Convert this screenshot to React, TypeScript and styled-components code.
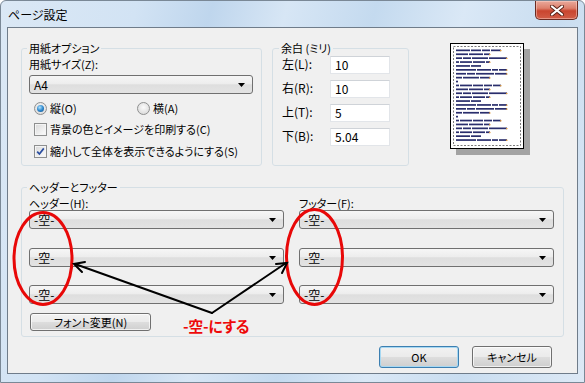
import React from "react";
import styled, { createGlobalStyle } from "styled-components";

const GlobalStyle = createGlobalStyle`
  html, body {
    margin: 0;
    padding: 0;
    background: #ffffff;
  }
  body {
    font-family: "Noto Sans CJK JP", "Noto Sans", sans-serif;
    font-size: 11px;
    color: #000;
    font-feature-settings: "palt" 1;
  }
`;

const Window = styled.div`
  position: relative;
  width: 585px;
  height: 383px;
  box-sizing: border-box;
  border: 1px solid #7a8896;
  border-radius: 6px 6px 0 0;
  padding: 0 6px 8px 6px;
  display: flex;
  flex-direction: column;
  overflow: hidden;
  background: linear-gradient(
    105deg,
    #dbe8f5 0%,
    #d2e3f4 20%,
    #bfd6ed 31%,
    #d7e6f5 42%,
    #c4daef 55%,
    #dae8f6 68%,
    #c9ddf0 82%,
    #dde9f6 100%
  );
`;

const TitleBar = styled.div`
  height: 26px;
  display: flex;
  align-items: flex-start;
`;

const Title = styled.div`
  padding-top: 7px;
  margin-left: 1px;
  font-size: 12px;
  line-height: 14px;
  color: #000;
`;

const CloseButton = styled.div`
  margin-left: auto;
  width: 43px;
  height: 19px;
  box-sizing: border-box;
  border: 1px solid #6b2b22;
  border-top: none;
  border-radius: 0 0 5px 5px;
  background: linear-gradient(
    180deg,
    #e9a99b 0%,
    #dd806c 40%,
    #c9452f 55%,
    #d15d47 100%
  );
  box-shadow: inset 0 0 0 1px rgba(255, 220, 210, 0.45);
  display: flex;
  align-items: center;
  justify-content: center;
`;

const Client = styled.div`
  flex: 1;
  border: 1px solid #6f7c8a;
  background: #f0f0f0;
  padding: 13px 12px 0 13px;
  display: flex;
  flex-direction: column;
`;

const TopRow = styled.div`
  display: flex;
  align-items: flex-start;
`;

const Group = styled.fieldset<{ $w: number; $h: number; $pl?: number }>`
  margin: 0;
  box-sizing: border-box;
  width: ${(p) => p.$w}px;
  height: ${(p) => p.$h}px;
  border: 1px solid #d5dfe5;
  border-radius: 3px;
  padding: 0 8px 0 ${(p) => p.$pl ?? 7}px;
  min-width: 0;
`;

const Legend = styled.legend<{ $ml?: number }>`
  padding: 0 2px;
  margin-left: ${(p) => p.$ml ?? -2}px;
  font-size: 11px;
  line-height: 14px;
`;

const Label = styled.div<{ $mt?: number }>`
  line-height: 14px;
  margin-top: ${(p) => p.$mt ?? 0}px;
`;

const Combo = styled.div<{ $mt?: number }>`
  height: 19px;
  box-sizing: border-box;
  margin-top: ${(p) => p.$mt ?? 0}px;
  border: 1px solid #707070;
  border-radius: 3px;
  background: linear-gradient(
    180deg,
    #f6f6f6 0%,
    #ededed 45%,
    #dedede 52%,
    #e3e3e3 100%
  );
  display: flex;
  align-items: center;
  justify-content: space-between;
  padding: 0 7px 0 4px;
  font-size: 12px;
  line-height: 14px;
`;

const ChoiceRow = styled.div<{ $mt: number }>`
  display: flex;
  align-items: center;
  height: 14px;
  margin-top: ${(p) => p.$mt}px;
  padding-left: 5px;
`;

const Choice = styled.label<{ $w?: number }>`
  display: flex;
  align-items: center;
  gap: 3px;
  width: ${(p) => (p.$w ? `${p.$w}px` : "auto")};
  line-height: 14px;
`;

const Radio = styled.span<{ $on?: boolean }>`
  position: relative;
  width: 11px;
  height: 11px;
  border-radius: 50%;
  border: 1px solid #8e8f8f;
  background: radial-gradient(circle at 50% 40%, #fbfbfb 0%, #d4d4d4 100%);
  flex: none;
  &::after {
    content: "";
    display: ${(p) => (p.$on ? "block" : "none")};
    position: absolute;
    left: 2px;
    top: 2px;
    width: 7px;
    height: 7px;
    border-radius: 50%;
    background: radial-gradient(
      circle at 40% 35%,
      #b4e4fb 0%,
      #2f8ad0 50%,
      #13497f 100%
    );
  }
`;

const Check = styled.span`
  width: 13px;
  height: 13px;
  box-sizing: border-box;
  border: 1px solid #8e8f8f;
  background: linear-gradient(135deg, #d8d8d8 0%, #f6f6f6 80%);
  box-shadow: inset 0 0 0 1px #f4f4f4;
  flex: none;
  display: flex;
  align-items: center;
  justify-content: center;
`;

const MarginGrid = styled.div`
  display: grid;
  grid-template-columns: 48px 60px;
  grid-auto-rows: 18px;
  row-gap: 6px;
  margin-top: 1px;
  align-items: center;
`;

const MarginLabel = styled.div`
  font-size: 12px;
  line-height: 14px;
  margin-top: -2px;
`;

const TextBox = styled.div`
  height: 18px;
  box-sizing: border-box;
  background: #fff;
  border: 1px solid #e2e5e9;
  border-top-color: #cfd3d8;
  padding: 0 4px;
  font-size: 12px;
  line-height: 16px;
`;

const PreviewPage = styled.div`
  width: 74px;
  height: 106px;
  box-sizing: border-box;
  margin: 2px 0 0 41px;
  background: #fff;
  border: 1px solid #000;
  box-shadow: 6px 6px 0 #a3a3a3;
`;

const BottomGroup = styled(Group)`
  margin-top: 14px;
`;

const Columns = styled.div`
  display: grid;
  grid-template-columns: 255px 255px;
  column-gap: 15px;
`;

const Column = styled.div`
  display: flex;
  flex-direction: column;
`;

const PushButton = styled.div<{ $w: number; $h: number; $default?: boolean }>`
  width: ${(p) => p.$w}px;
  height: ${(p) => p.$h}px;
  box-sizing: border-box;
  border: 1px solid ${(p) => (p.$default ? "#3c7fb1" : "#707070")};
  border-radius: 3px;
  background: linear-gradient(
    180deg,
    #f2f2f2 0%,
    #ebebeb 48%,
    #dddddd 52%,
    #cfcfcf 100%
  );
  box-shadow: inset 0 0 0 1px
    ${(p) => (p.$default ? "#a7d8f2" : "rgba(255,255,255,0.7)")};
  display: flex;
  align-items: center;
  justify-content: center;
  font-size: 11px;
  line-height: 14px;
`;

const FontButton = styled(PushButton)`
  margin: 9px 0 0 1px;
`;

const ButtonRow = styled.div`
  display: flex;
  justify-content: flex-end;
  gap: 13px;
  margin-top: 9px;
  padding-right: 13px;
`;

const Overlay = styled.svg`
  position: absolute;
  left: -1px;
  top: -1px;
  pointer-events: none;
`;

const Note = styled.span`
  position: absolute;
  left: 182px;
  top: 316px;
  font-size: 15px;
  line-height: 18px;
  font-weight: bold;
  color: #ee0a0a;
  letter-spacing: -0.3px;
`;

const Arrow: React.FC = () => (
  <svg width="7" height="4" viewBox="0 0 7 4">
    <path d="M0 0 H7 L3.5 4 Z" fill="#000" />
  </svg>
);

const ComboBox: React.FC<{ text: string; mt?: number }> = ({ text, mt }) => (
  <Combo $mt={mt}>
    <span>{text}</span>
    <Arrow />
  </Combo>
);

const CheckMark: React.FC = () => (
  <svg width="9" height="9" viewBox="0 0 9 9">
    <path
      d="M1.2 4.6 L3.4 7 L7.8 1.4"
      fill="none"
      stroke="#2b4ea0"
      strokeWidth="1.7"
    />
  </svg>
);

// thumbnail of the printed page: rows of tiny "words"
const rows: number[][] = [
  [14, 10, 8, 10],
  [12, 14, 6],
  [6, 8, 16, 18],
  [3, 12, 12, 4],
  [14, 10],
  [20, 14, 6, 8],
  [10, 8, 18, 12],
  [6, 16, 10],
  [2],
  [3, 12, 10, 8, 8],
  [12, 14, 6],
  [6, 8, 16, 18],
  [3, 12, 12, 4],
  [14, 10],
  [20, 14, 6, 8],
  [10, 8, 18, 12],
  [6, 16, 10],
  [2],
  [3, 12, 10, 8, 8],
  [12, 14, 6],
  [6, 8, 16, 18],
  [3, 12, 12, 4],
  [14, 10],
  [20, 14, 6, 8],
];

const PageThumb: React.FC = () => (
  <svg width="72" height="104" viewBox="0 0 72 104">
    <rect
      x="2.5"
      y="2.5"
      width="67"
      height="99"
      fill="none"
      stroke="#7a7a7a"
      strokeDasharray="2 1.5"
    />
    {rows.map((words, i) => {
      let x = 5;
      return (
        <g key={i}>
          {words.map((w, j) => {
            const r = (
              <rect
                key={j}
                x={x}
                y={5.5 + i * 3.9}
                width={w}
                height={1.7}
                fill="#2a2e6c"
              />
            );
            x += w + 1;
            return r;
          })}
          {words.length > 2 && (
            <rect
              x={x - 2}
              y={6 + i * 3.9}
              width={1.5}
              height={1.2}
              fill="#e09a3a"
            />
          )}
        </g>
      );
    })}
  </svg>
);

const App: React.FC = () => {
  return (
    <>
      <GlobalStyle />
      <Window>
        <TitleBar>
          <Title>ページ設定</Title>
          <CloseButton>
            <svg width="14" height="11" viewBox="0 0 14 11">
              <path
                d="M2 1.5 L12 9.5 M12 1.5 L2 9.5"
                stroke="#5a2318"
                strokeWidth="4"
                strokeLinecap="round"
              />
              <path
                d="M2 1.5 L12 9.5 M12 1.5 L2 9.5"
                stroke="#ffffff"
                strokeWidth="2.2"
                strokeLinecap="round"
              />
            </svg>
          </CloseButton>
        </TitleBar>
        <Client>
          <TopRow>
            <Group $w={241} $h={125}>
              <Legend>用紙オプション</Legend>
              <Label $mt={2}>用紙サイズ(Z):</Label>
              <ComboBox text="A4" mt={4} />
              <ChoiceRow $mt={7}>
                <Choice $w={103}>
                  <Radio $on />
                  <span>縦(O)</span>
                </Choice>
                <Choice>
                  <Radio />
                  <span>横(A)</span>
                </Choice>
              </ChoiceRow>
              <ChoiceRow $mt={7}>
                <Choice>
                  <Check />
                  <span>背景の色とイメージを印刷する(C)</span>
                </Choice>
              </ChoiceRow>
              <ChoiceRow $mt={8}>
                <Choice>
                  <Check>
                    <CheckMark />
                  </Check>
                  <span>縮小して全体を表示できるようにする(S)</span>
                </Choice>
              </ChoiceRow>
            </Group>
            <Group $w={137} $h={125} $pl={9} style={{ marginLeft: 10 }}>
              <Legend $ml={-3}>余白 (ミリ)</Legend>
              <MarginGrid>
                <MarginLabel>左(L):</MarginLabel>
                <TextBox>10</TextBox>
                <MarginLabel>右(R):</MarginLabel>
                <TextBox>10</TextBox>
                <MarginLabel>上(T):</MarginLabel>
                <TextBox>5</TextBox>
                <MarginLabel>下(B):</MarginLabel>
                <TextBox>5.04</TextBox>
              </MarginGrid>
            </Group>
            <PreviewPage>
              <PageThumb />
            </PreviewPage>
          </TopRow>
          <BottomGroup $w={543} $h={157}>
            <Legend>ヘッダーとフッター</Legend>
            <Columns>
              <Column>
                <Label $mt={2}>ヘッダー(H):</Label>
                <ComboBox text="-空-" />
                <ComboBox text="-空-" mt={19} />
                <ComboBox text="-空-" mt={18} />
                <FontButton $w={121} $h={18}>
                  フォント変更(N)
                </FontButton>
              </Column>
              <Column>
                <Label $mt={2}>フッター(F):</Label>
                <ComboBox text="-空-" />
                <ComboBox text="-空-" mt={19} />
                <ComboBox text="-空-" mt={18} />
              </Column>
            </Columns>
          </BottomGroup>
          <ButtonRow>
            <PushButton $w={80} $h={22} $default>
              OK
            </PushButton>
            <PushButton $w={80} $h={22}>
              キャンセル
            </PushButton>
          </ButtonRow>
        </Client>
        <Overlay width="585" height="383" viewBox="0 0 585 383">
          <ellipse
            cx="43"
            cy="258.5"
            rx="29"
            ry="46"
            fill="none"
            stroke="#e80808"
            strokeWidth="3"
          />
          <ellipse
            cx="314.5"
            cy="257"
            rx="28"
            ry="47.5"
            fill="none"
            stroke="#e80808"
            strokeWidth="3"
          />
          <g fill="none" stroke="#000" strokeWidth="2" strokeLinecap="round">
            <path d="M212 313 L75 264" />
            <path d="M82 272 L74 264 L85 262" />
            <path d="M212 313 L286 263" />
            <path d="M276 264 L287 263 L282 273" />
          </g>
        </Overlay>
        <Note>-空-にする</Note>
      </Window>
    </>
  );
};

export default App;
